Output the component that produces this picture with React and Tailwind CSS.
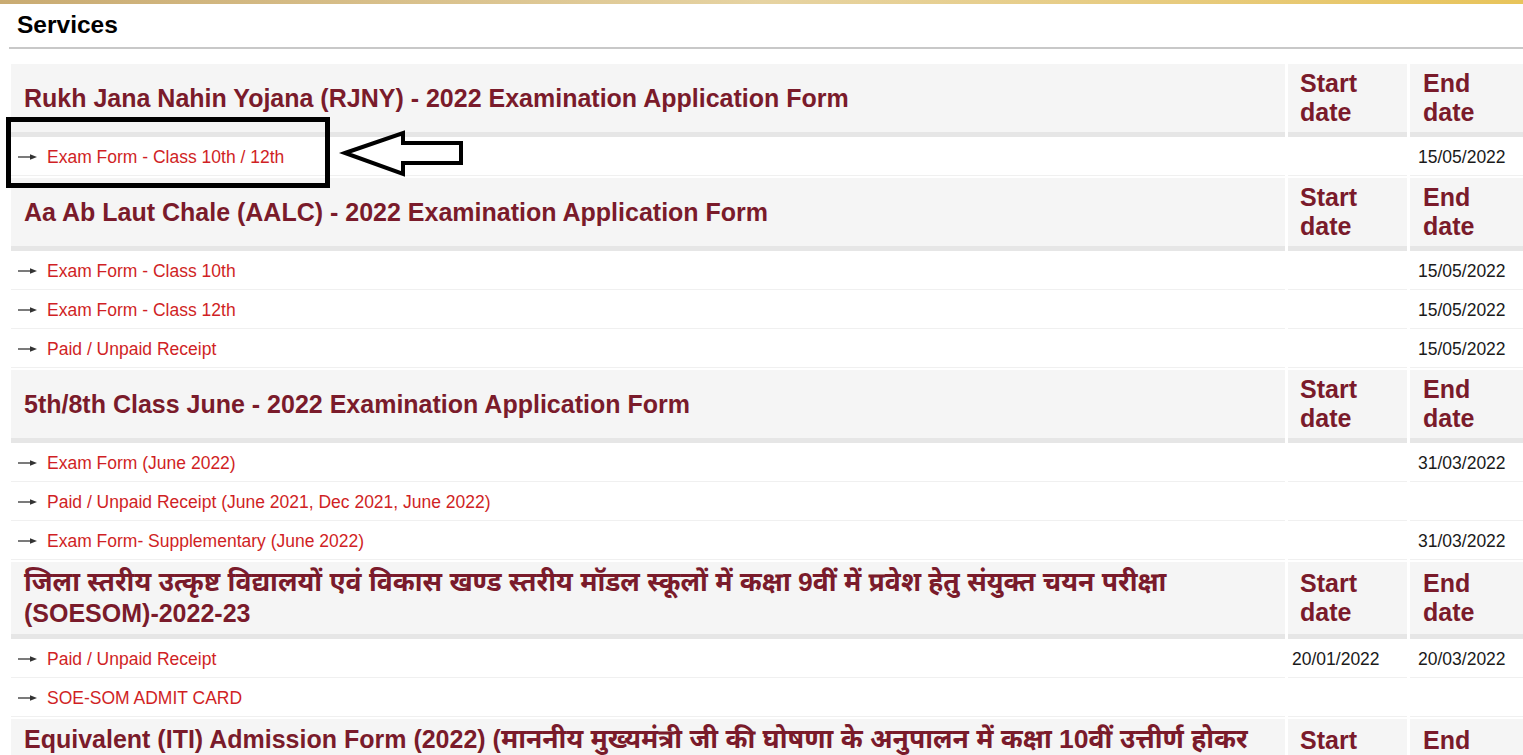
import React from "react";

// Devanagari runs are set a little larger than the Latin text around them
const Hi = ({ children }) => <span className="text-[26.5px]">{children}</span>;

const sections = [
  {
    title: "Rukh Jana Nahin Yojana (RJNY) - 2022 Examination Application Form",
    rows: [{ label: "Exam Form - Class 10th / 12th", end: "15/05/2022" }],
  },
  {
    title: "Aa Ab Laut Chale (AALC) - 2022 Examination Application Form",
    rows: [
      { label: "Exam Form - Class 10th", end: "15/05/2022" },
      { label: "Exam Form - Class 12th", end: "15/05/2022" },
      { label: "Paid / Unpaid Receipt", end: "15/05/2022" },
    ],
  },
  {
    title: "5th/8th Class June - 2022 Examination Application Form",
    rows: [
      { label: "Exam Form (June 2022)", end: "31/03/2022" },
      { label: "Paid / Unpaid Receipt (June 2021, Dec 2021, June 2022)" },
      { label: "Exam Form- Supplementary (June 2022)", end: "31/03/2022" },
    ],
  },
  {
    hindi: true,
    title: (
      <>
        <Hi>
          जिला स्तरीय उत्कृष्ट विद्यालयों एवं विकास खण्ड स्तरीय मॉडल स्कूलों में कक्षा 9वीं में प्रवेश हेतु संयुक्त चयन परीक्षा
        </Hi>{" "}
        (SOESOM)-2022-23
      </>
    ),
    rows: [
      { label: "Paid / Unpaid Receipt", start: "20/01/2022", end: "20/03/2022" },
      { label: "SOE-SOM ADMIT CARD" },
    ],
  },
  {
    hindi: true,
    title: (
      <>
        Equivalent (ITI) Admission Form (2022) (
        <Hi>
          माननीय मुख्यमंत्री जी की घोषणा के अनुपालन में कक्षा 10वीं उत्तीर्ण होकर आई.टी.आई. उत्तीर्ण करने वाले विद्यार्थियों हेतु
        </Hi>
        )
      </>
    ),
    rows: [{ label: "Equivalent Admission Form", end: "30/06/2022" }],
  },
];

const font = "font-['Liberation_Sans','Noto_Sans_Devanagari','Lohit_Devanagari',Arial,sans-serif]";

const Bullet = () => (
  <svg width="19" height="8" viewBox="0 0 19 8" className="shrink-0">
    <line x1="0" y1="4" x2="14" y2="4" stroke="#333" strokeWidth="1.3" />
    <path d="M12 1.2 L19 4 L12 6.8 Z" fill="#333" />
  </svg>
);

const HeadCell = ({ children, className = "" }) => (
  <th
    className={`bg-[#f5f5f5] border-b-[5px] border-[#e6e6e6] px-[13px] py-[5px] text-left align-middle font-bold text-[25px] text-[#7a1b2b] ${className}`}
  >
    {children}
  </th>
);

const Section = ({ title, rows, hindi }) => (
  <>
    <tr>
      <HeadCell className={hindi ? "leading-[31px]" : "leading-[29px]"}>{title}</HeadCell>
      <HeadCell className="pl-[12px] leading-[29px]">
        Start
        <br />
        date
      </HeadCell>
      <HeadCell className="leading-[29px]">
        End
        <br />
        date
      </HeadCell>
    </tr>
    {rows.map((r, i) => (
      <tr key={i} className="text-[17.5px] leading-[20px]">
        <td className="bg-white border-b border-[#f0f0f0] pl-[7px] py-[8px]">
          <div className="flex items-center gap-[10px]">
            <Bullet />
            <a href="#" className="text-[#d01f25]">
              {r.label}
            </a>
          </div>
        </td>
        <td className="bg-white border-b border-[#f0f0f0] pl-[4px] py-[8px] text-[#1a1a1a]">
          {r.start}
        </td>
        <td className="bg-white border-b border-[#f0f0f0] pl-[8px] py-[8px] text-[#1a1a1a]">
          {r.end}
        </td>
      </tr>
    ))}
  </>
);

export default function App() {
  return (
    <div className={`relative h-screen w-full overflow-hidden bg-white ${font}`}>
      <div className="h-[4px] bg-linear-to-r from-[#c9ab72] via-[#e6d3a2] to-[#e8c45a]" />
      <div className="w-[1545px] pl-[9px]">
        {/* Services heading */}
        <div className="border-b-2 border-[#c8c8c8] pl-[8px] pt-[6px] pb-[8px]">
          <h2 className="font-bold text-[24.5px] leading-[29px] text-black">Services</h2>
        </div>

        <table className="mt-[13px] -ml-[1px] w-[1537px] table-fixed border-separate border-spacing-x-[3px] border-spacing-y-[2px]">
          <colgroup>
            <col />
            <col className="w-[119px]" />
            <col className="w-[132px]" />
          </colgroup>
          <tbody>
            {sections.map((s, i) => (
              <Section key={i} {...s} />
            ))}
          </tbody>
        </table>
      </div>

      {/* highlight box and pointer over the first form link */}
      <div className="absolute left-[6px] top-[117px] w-[324px] h-[71px] border-[5px] border-black" />
      <svg
        className="absolute left-[336px] top-[126px]"
        width="132"
        height="56"
        viewBox="0 0 132 56"
      >
        <polygon
          points="9,27 67,7 67,17 125,17 125,37 67,37 67,48"
          fill="none"
          stroke="#000"
          strokeWidth="4"
          strokeLinejoin="miter"
        />
      </svg>
    </div>
  );
}
